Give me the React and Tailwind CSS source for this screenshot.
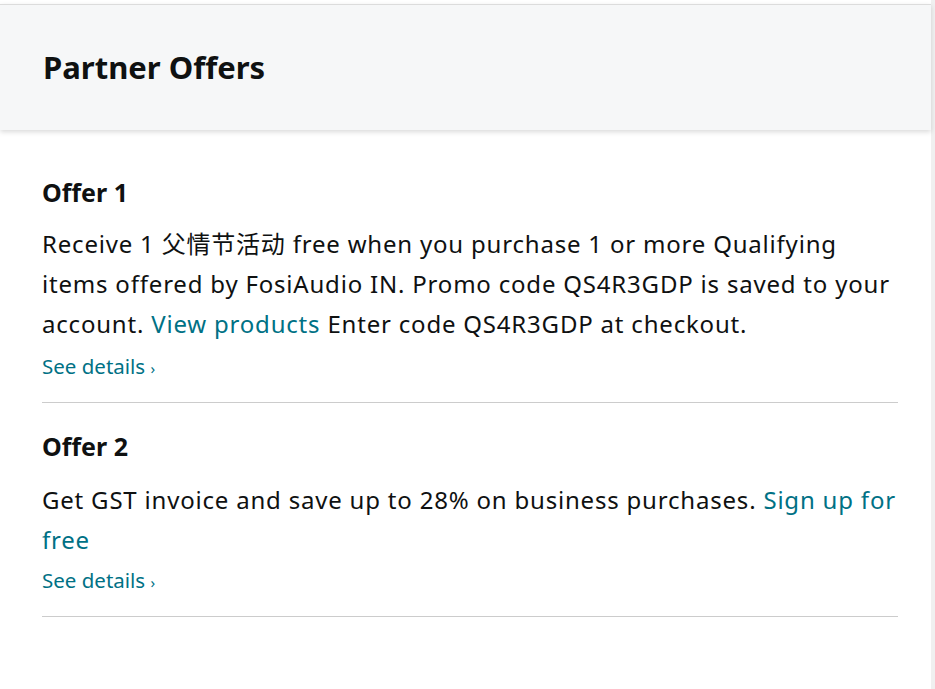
export default function App() {
  const font = { fontFamily: '"Noto Sans", "Noto Sans CJK SC", sans-serif' };
  return (
    <div className="w-[935px] h-[689px] overflow-hidden bg-[#f0f0f0] flex" style={font}>
      <div className="w-[931px] h-full bg-white flex flex-col pt-[4px]">
        <div className="border-t border-[#dcdcdc] bg-[#f6f7f8] h-[126px] flex items-center px-[43px] shadow-[0_2px_5px_rgba(0,0,0,0.15)] relative z-10">
          <h1 className="text-[31px] font-bold text-[#0f1111] leading-none">Partner Offers</h1>
        </div>
        <div className="px-[42px] pt-[46px] text-[#0f1111]">
          <div className="pb-[19px] border-b border-[#cccccc] w-[856px]">
            <h2 className="text-[25px] font-bold leading-[32px]">Offer 1</h2>
            <p className="text-[24px] leading-[40px] mt-[16px] tracking-[0.8px]">
              Receive 1 父情节活动 free when you purchase 1 or more Qualifying items offered by FosiAudio IN. Promo code QS4R3GDP is saved to your account. <span className="text-[#007185]">View products</span> Enter code QS4R3GDP at checkout.
            </p>
            <div className="text-[20.5px] leading-[30px] text-[#007185] mt-[7px]">See details <span className="text-[15px]">›</span></div>
          </div>
          <div className="pt-[27px] pb-[19px] border-b border-[#cccccc] w-[856px]">
            <h2 className="text-[25px] font-bold leading-[32px]">Offer 2</h2>
            <p className="text-[24px] leading-[40px] mt-[18px] tracking-[0.8px]">
              Get GST invoice and save up to 28% on business purchases. <span className="text-[#007185]">Sign up for free</span>
            </p>
            <div className="text-[20.5px] leading-[30px] text-[#007185] mt-[5px]">See details <span className="text-[15px]">›</span></div>
          </div>
        </div>
      </div>
    </div>
  );
}
